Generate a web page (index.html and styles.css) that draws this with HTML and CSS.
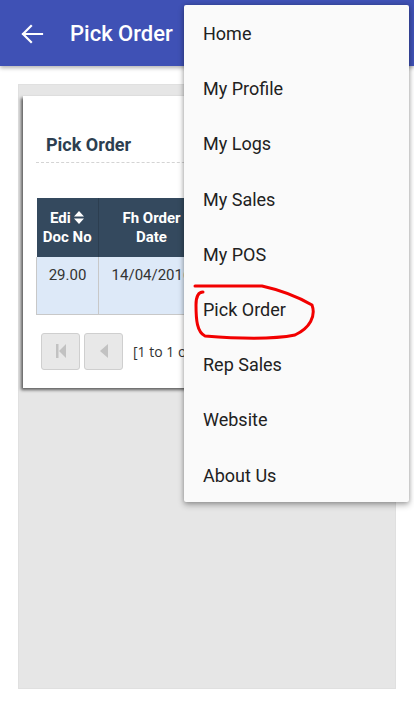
FILE: index.html
```html
<!DOCTYPE html>
<html>
<head>
<meta charset="utf-8">
<link rel="stylesheet" href="styles.css">
</head>
<body>
<header class="appbar">
  <svg class="back" width="24" height="20" viewBox="0 0 24 20"><path d="M2 10H21M2 10L10 2M2 10L10 18" fill="none" stroke="#fff" stroke-width="2.2" stroke-linecap="square"/></svg>
  <h1 class="title">Pick Order</h1>
</header>
<main class="content">
  <section class="panel">
    <div class="card">
      <h2 class="card-title">Pick Order</h2>
      <div class="table-wrap">
        <table class="grid">
          <thead>
            <tr>
              <th class="c1">Edi <svg class="sort" width="10" height="13" viewBox="0 0 10 13"><path d="M5 0L10 5.5H0z M5 13L0 7.5H10z" fill="#fff"/></svg><br>Doc No</th>
              <th class="c2">Fh Order<br>Date</th>
            </tr>
          </thead>
          <tbody>
            <tr>
              <td>29.00</td>
              <td class="d2">14/04/2016</td>
            </tr>
          </tbody>
        </table>
      </div>
      <div class="pager">
        <button class="pbtn"><svg width="10" height="14" viewBox="0 0 10 14"><path d="M0 0H2.5V14H0z M10 0V14L3 7z" fill="#c2c2c2"/></svg></button>
        <button class="pbtn"><svg width="8" height="14" viewBox="0 0 8 14"><path d="M8 0V14L0 7z" fill="#c2c2c2"/></svg></button>
        <span class="ptext">[1 to 1 of 1]</span>
      </div>
    </div>
  </section>
</main>
<nav class="menu">
  <div class="item">Home</div>
  <div class="item">My Profile</div>
  <div class="item">My Logs</div>
  <div class="item">My Sales</div>
  <div class="item">My POS</div>
  <div class="item">Pick Order</div>
  <div class="item">Rep Sales</div>
  <div class="item">Website</div>
  <div class="item">About Us</div>
</nav>
<svg class="mark" width="414" height="708" viewBox="0 0 414 708"><path d="M195 286 L262 286 C280 290 300 298 312 305 C316 316 310 328 295 335 C270 340 230 338 205 336 C197 332 196 320 196 305 C196 296 198 292 203 292" fill="none" stroke="#f20000" stroke-width="3" stroke-linecap="round" stroke-linejoin="round"/></svg>
</body>
</html>
```
FILE: styles.css
```css
* { box-sizing: border-box; }
html, body { margin: 0; padding: 0; }
body {
  width: 414px;
  height: 708px;
  overflow: hidden;
  background: #fff;
  font-family: Roboto, "Noto Sans", sans-serif;
  position: relative;
}
.appbar {
  height: 66px;
  background: #3f51b5;
  display: flex;
  align-items: center;
  padding-left: 21px;
  box-shadow: 0 2px 4px rgba(0,0,0,0.3);
  position: relative;
  z-index: 1;
}
.back { display: block; margin-top: 1px; }
.title {
  margin: 0 0 0 25px;
  color: #fff;
  font-size: 22px;
  font-weight: 500;
}
.content {
  padding: 18px 18px 0 18px;
}
.panel {
  width: 378px;
  height: 605px;
  background: #e6e6e6;
  border: 1px solid #e0e0e0;
  padding: 11px 4px 0 4px;
}
.card {
  height: 292px;
  background: #fff;
  box-shadow: -2px 2px 3px rgba(0,0,0,0.6);
  padding: 0 0 0 13px;
  overflow: hidden;
}
.card-title {
  margin: 0;
  padding: 38px 0 0 10px;
  height: 67px;
  border-bottom: 1px dashed #d4d4d4;
  color: #2c3e50;
  font-size: 18px;
  font-weight: 700;
  line-height: 22px;
}
.table-wrap {
  margin-top: 35px;
}
.grid {
  border-collapse: collapse;
  white-space: nowrap;
  font-size: 15px;
}
.grid th {
  background: #34495e;
  color: #fff;
  font-weight: 700;
  height: 59px;
  padding: 1px 6px 0;
  line-height: 19px;
  text-align: center;
  border-right: 1px solid #2c3e50;
}
.grid th.c1 { width: 62px; }
.grid th.c2 { width: 106px; padding: 1px 0 0; }
.sort { vertical-align: -1px; }
.grid td {
  background: #dde9f8;
  color: #333;
  height: 57px;
  vertical-align: top;
  padding: 9px 7px 0;
  text-align: center;
  border: 1px solid #c8c8c8;
  border-top: none;
}
.grid td.d2 { padding: 9px 0 0; }
.pager {
  display: flex;
  align-items: center;
  gap: 4px;
  margin: 18px 0 0 5px;
}
.pbtn {
  width: 39px;
  height: 37px;
  background: #e8e8e8;
  border: 1px solid #cfcfcf;
  border-radius: 3px;
  display: flex;
  align-items: center;
  justify-content: center;
  padding: 0;
}
.ptext {
  margin-left: 6px;
  font-family: "Open Sans", sans-serif;
  font-size: 14px;
  color: #333;
}
.menu {
  position: absolute;
  left: 184px;
  top: 5px;
  width: 225px;
  height: 497px;
  background: #fafafa;
  border-radius: 2px;
  box-shadow: 0 3px 6px rgba(0,0,0,0.3), 0 0 4px rgba(0,0,0,0.2);
  padding-top: 1px;
  z-index: 2;
}
.item {
  height: 55.2px;
  display: flex;
  align-items: center;
  padding-left: 19px;
  font-size: 18px;
  color: #212121;
}
.mark {
  position: absolute;
  left: 0;
  top: 0;
  z-index: 3;
  pointer-events: none;
}
```
